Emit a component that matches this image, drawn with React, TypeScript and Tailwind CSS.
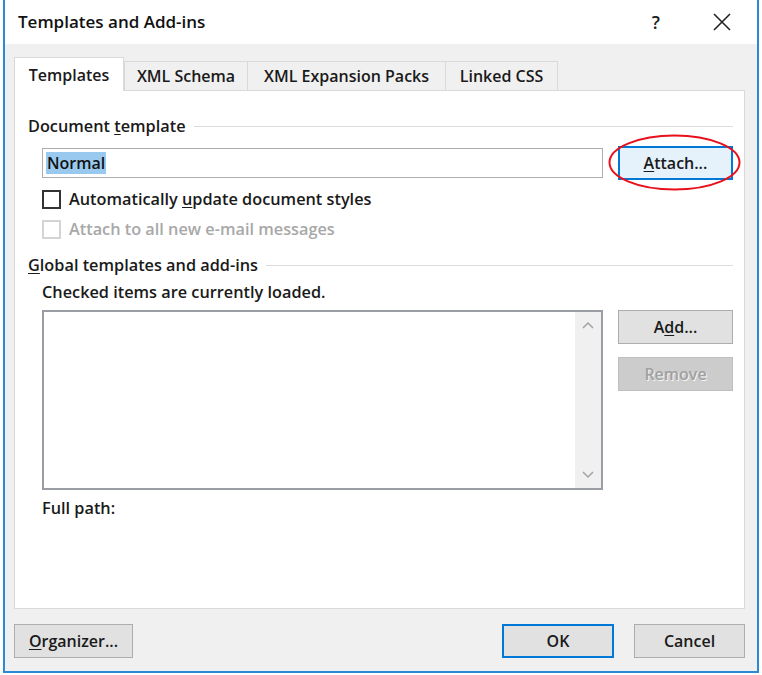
import React from 'react'

const font = { fontFamily: '"Segoe UI", "Open Sans", "Noto Sans", sans-serif' }

const Tab = ({ label, width, active }: { label: string; width: string; active?: boolean }) =>
  active ? (
    <div
      className={`relative z-10 -mb-px flex h-[34px] items-center justify-center border border-b-0 border-[#d9d9d9] bg-white text-[16px] font-semibold text-[#1a1a1a] ${width}`}
    >
      {label}
    </div>
  ) : (
    <div
      className={`-ml-px flex h-[29px] items-center justify-center border border-b-0 border-[#d9d9d9] bg-[#f0f0f0] text-[16px] font-semibold text-[#1a1a1a] ${width}`}
    >
      {label}
    </div>
  )

const Button = ({
  children,
  width,
  variant = 'normal',
}: {
  children: React.ReactNode
  width: string
  variant?: 'normal' | 'focus' | 'default' | 'disabled'
}) => {
  const styles = {
    normal: 'border border-[#adadad] bg-[#e1e1e1] text-[#1a1a1a]',
    focus: 'border-2 border-[#0078d7] bg-[#e5f1fb] text-[#1a1a1a]',
    default: 'border-2 border-[#0078d7] bg-[#e1e1e1] text-[#1a1a1a]',
    disabled: 'border border-[#bfbfbf] bg-[#cccccc] text-[#a0a0a0]',
  }
  return (
    <div className={`flex h-[34px] items-center justify-center text-[16px] font-semibold ${width} ${styles[variant]}`}>
      {children}
    </div>
  )
}

const SectionTitle = ({ children }: { children: React.ReactNode }) => (
  <div className="flex h-[20px] items-center gap-2 text-[16.3px] font-semibold leading-[20px] text-[#1a1a1a]">
    <span className="whitespace-nowrap">{children}</span>
    <div className="h-px flex-1 bg-[#dcdcdc]" />
  </div>
)

const Checkbox = ({ label, disabled }: { label: React.ReactNode; disabled?: boolean }) => (
  <div className="flex h-[20px] items-center gap-[8px] text-[16.3px] font-semibold leading-[20px]">
    <div
      className={`h-[19px] w-[19px] border-2 bg-white ${disabled ? 'border-[#d4d4d4]' : 'border-[#333333]'}`}
    />
    <span className={disabled ? 'text-[#a8a8a8]' : 'text-[#1a1a1a]'}>{label}</span>
  </div>
)

export default function App() {
  return (
    <div className="h-[675px] w-[762px] overflow-hidden bg-white" style={font}>
      <div className="ml-[3px] flex h-[673px] w-[756px] flex-col border-x-2 border-b-2 border-[#2b8ad6]">
        {/* title bar */}
        <div className="flex h-[44px] items-center bg-white pl-[13px] pr-[26px]">
          <span className="text-[17px] font-semibold text-[#111]">Templates and Add-ins</span>
          <span className="ml-auto mr-[53px] text-[18px] font-semibold text-[#222]">?</span>
          <svg width="18" height="18" viewBox="0 0 18 18" className="text-[#222]">
            <path d="M1 1 L17 17 M17 1 L1 17" stroke="currentColor" strokeWidth="1.6" />
          </svg>
        </div>

        {/* body */}
        <div className="flex flex-1 flex-col bg-[#f0f0f0] pl-[9px] pr-[12px] pt-[13px]">
          <div className="flex items-end">
            <Tab label="Templates" width="w-[110px]" active />
            <div className="flex">
              <div className="w-px" />
              <Tab label="XML Schema" width="w-[124px]" />
              <Tab label="XML Expansion Packs" width="w-[199px]" />
              <Tab label="Linked CSS" width="w-[113px]" />
            </div>
          </div>

          <div className="flex h-[519px] flex-col border border-[#d9d9d9] bg-white pl-[13px] pr-[11px] pt-[25px]">
            <SectionTitle>
              Document <span className="underline underline-offset-2">t</span>emplate
            </SectionTitle>

            <div className="mt-[10px] flex items-center pl-[14px]">
              <div className="flex h-[30px] w-[561px] items-center border border-[#adadad] bg-white px-[3px]">
                <span className="bg-[#99c9ef] px-[1px] text-[16px] font-semibold leading-[22px] text-[#111]">
                  Normal
                </span>
              </div>
              <div className="relative ml-auto">
                <Button width="w-[115px]" variant="focus">
                  <span>
                    <span className="underline underline-offset-2">A</span>ttach...
                  </span>
                </Button>
                <svg
                  className="pointer-events-none absolute left-[-10px] top-[-12px]"
                  width="133"
                  height="57"
                  viewBox="0 0 133 57"
                >
                  <ellipse cx="66.5" cy="28.5" rx="65" ry="27" fill="none" stroke="#e8101a" strokeWidth="2" />
                </svg>
              </div>
            </div>

            <div className="mt-[9px] pl-[14px]">
              <Checkbox
                label={
                  <>
                    Automatically <span className="underline underline-offset-2">u</span>pdate document styles
                  </>
                }
              />
            </div>
            <div className="mt-[10px] pl-[14px]">
              <Checkbox label="Attach to all new e-mail messages" disabled />
            </div>

            <div className="mt-[16px]">
              <SectionTitle>
                <span className="underline underline-offset-2">G</span>lobal templates and add-ins
              </SectionTitle>
            </div>

            <div className="mt-[7px] h-[20px] pl-[14px] text-[16.3px] font-semibold leading-[20px] text-[#1a1a1a]">
              Checked items are currently loaded.
            </div>

            <div className="mt-[8px] flex pl-[14px]">
              <div className="flex h-[180px] w-[561px] justify-end border-2 border-[#9a9da3] bg-white">
                <div className="flex w-[26px] flex-col items-center justify-between bg-[#f0f0f0] py-[9px]">
                  <svg width="12" height="8" viewBox="0 0 12 8">
                    <path d="M1 7 L6 2 L11 7" fill="none" stroke="#a3a3a3" strokeWidth="1.5" />
                  </svg>
                  <svg width="12" height="8" viewBox="0 0 12 8">
                    <path d="M1 1 L6 6 L11 1" fill="none" stroke="#a3a3a3" strokeWidth="1.5" />
                  </svg>
                </div>
              </div>
              <div className="ml-auto flex flex-col gap-[13px]">
                <Button width="w-[115px]">
                  <span>
                    A<span className="underline underline-offset-2">d</span>d...
                  </span>
                </Button>
                <Button width="w-[115px]" variant="disabled">
                  <span style={{ textShadow: '1px 1px 0 #f4f4f4' }}>Remove</span>
                </Button>
              </div>
            </div>

            <div className="mt-[8px] h-[20px] pl-[14px] text-[16.3px] font-semibold leading-[20px] text-[#1a1a1a]">
              Full path:
            </div>
          </div>

          <div className="mt-[15px] flex items-center">
            <Button width="w-[119px]">
              <span>
                <span className="underline underline-offset-2">O</span>rganizer...
              </span>
            </Button>
            <div className="ml-auto flex gap-[20px]">
              <Button width="w-[112px]" variant="default">
                OK
              </Button>
              <Button width="w-[111px]">Cancel</Button>
            </div>
          </div>
        </div>
      </div>
    </div>
  )
}
